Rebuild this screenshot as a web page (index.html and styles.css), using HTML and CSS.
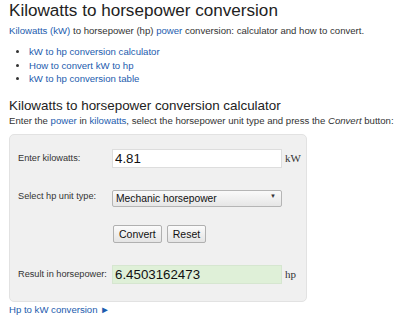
FILE: index.html
```html
<!DOCTYPE html>
<html lang="en">
<head>
  <meta charset="UTF-8" />
  <title>Kilowatts to horsepower conversion</title>
  <link rel="stylesheet" href="styles.css">
</head>
<body>
  <h1>Kilowatts to horsepower conversion</h1>
  <p class="intro"><a href="#">Kilowatts (kW)</a> to horsepower (hp) <a href="#">power</a> conversion: calculator and how to convert.</p>
  <ul class="toc">
    <li><a href="#calc">kW to hp conversion calculator</a></li>
    <li><a href="#how">How to convert kW to hp</a></li>
    <li><a href="#table">kW to hp conversion table</a></li>
  </ul>

  <h2 id="calc">Kilowatts to horsepower conversion calculator</h2>
  <p class="intro">Enter the <a href="#">power</a> in <a href="#">kilowatts</a>, select the horsepower unit type and press the <i>Convert</i> button:</p>

  <form class="calc">
    <label for="kw">Enter kilowatts:</label>
    <input type="text" id="kw" class="field" value="4.81">
    <span class="unit">kW</span>

    <label for="type">Select hp unit type:</label>
    <div class="select-wrap">
      <select id="type" class="select">
        <option>Mechanic horsepower</option>
        <option>Electrical horsepower</option>
        <option>Metric horsepower</option>
      </select>
      <span class="arrow">&#9660;</span>
    </div>
    <span></span>

    <span></span>
    <div class="buttons">
      <button type="button" class="btn">Convert</button>
      <button type="reset" class="btn">Reset</button>
    </div>
    <span></span>

    <label for="hp" class="result-label">Result in horsepower:</label>
    <input type="text" id="hp" class="field result" value="6.4503162473">
    <span class="unit result-unit">hp</span>
  </form>

  <p class="next"><a href="#">Hp to kW conversion &#9658;</a></p>
</body>
</html>
```

FILE: styles.css
```css
body {
  font-family: "Liberation Sans", Arial, sans-serif;
  color: #333;
  background: #fff;
  margin: 0;
  padding: 0 9px;
}
a {
  color: #1c5cae;
  text-decoration: none;
}
h1 {
  font-size: 17.1px;
  font-weight: normal;
  line-height: 22px;
  color: #222;
  margin: 0 0 2px;
}
h2 {
  font-size: 13.4px;
  font-weight: normal;
  line-height: 17px;
  color: #222;
  margin: 11px 0 0;
}
.intro {
  font-size: 9.6px;
  line-height: 13px;
  margin: 0;
  white-space: nowrap;
}
.toc {
  font-size: 9.6px;
  line-height: 13.5px;
  margin: 8px 0 0;
  padding-left: 20px;
}
.calc {
  width: 298px;
  box-sizing: border-box;
  margin-top: 7px;
  padding: 14px 8px 17px;
  background: #f0f0f0;
  border: 1px solid #e2e2e2;
  border-radius: 5px;
  display: grid;
  grid-template-columns: 91px 170px auto;
  column-gap: 3px;
  row-gap: 20px;
  align-items: center;
}
.calc label {
  font-size: 9.2px;
  color: #333;
  white-space: nowrap;
}
.field {
  box-sizing: border-box;
  height: 19px;
  width: 170px;
  margin: 0;
  padding: 0 2px;
  border: 1px solid #ddd;
  background: #fff;
  font-family: "Liberation Sans", Arial, sans-serif;
  font-size: 13.3px;
  color: #111;
  outline: none;
}
.unit {
  font-family: "Liberation Serif", "Times New Roman", serif;
  font-size: 11px;
  color: #333;
}
.select-wrap {
  position: relative;
  height: 17px;
}
.select {
  appearance: none;
  -webkit-appearance: none;
  box-sizing: border-box;
  width: 170px;
  height: 17px;
  margin: 0;
  padding: 0 3px;
  border: 1px solid #b5b5b5;
  border-radius: 2px;
  background: linear-gradient(#fafafa, #e6e6e6);
  font-family: "Liberation Sans", Arial, sans-serif;
  font-size: 10.3px;
  color: #111;
}
.arrow {
  position: absolute;
  right: 6px;
  top: 5px;
  font-size: 6px;
  color: #333;
  pointer-events: none;
}
.buttons {
  display: flex;
  gap: 5px;
  padding-left: 1px;
}
.btn {
  height: 18px;
  padding: 0 5px;
  border: 1px solid #b0b0b0;
  border-radius: 2px;
  background: linear-gradient(#fbfbfb, #e4e4e4);
  font-family: "Liberation Sans", Arial, sans-serif;
  font-size: 10.5px;
  color: #111;
}
.result-label,
.result,
.result-unit {
  margin-top: 2px;
}
.result {
  background: #dff0d8;
  border-color: #d6e6d0;
}
.next {
  font-size: 9.6px;
  line-height: 13px;
  margin: 1px 0 0;
}
```
